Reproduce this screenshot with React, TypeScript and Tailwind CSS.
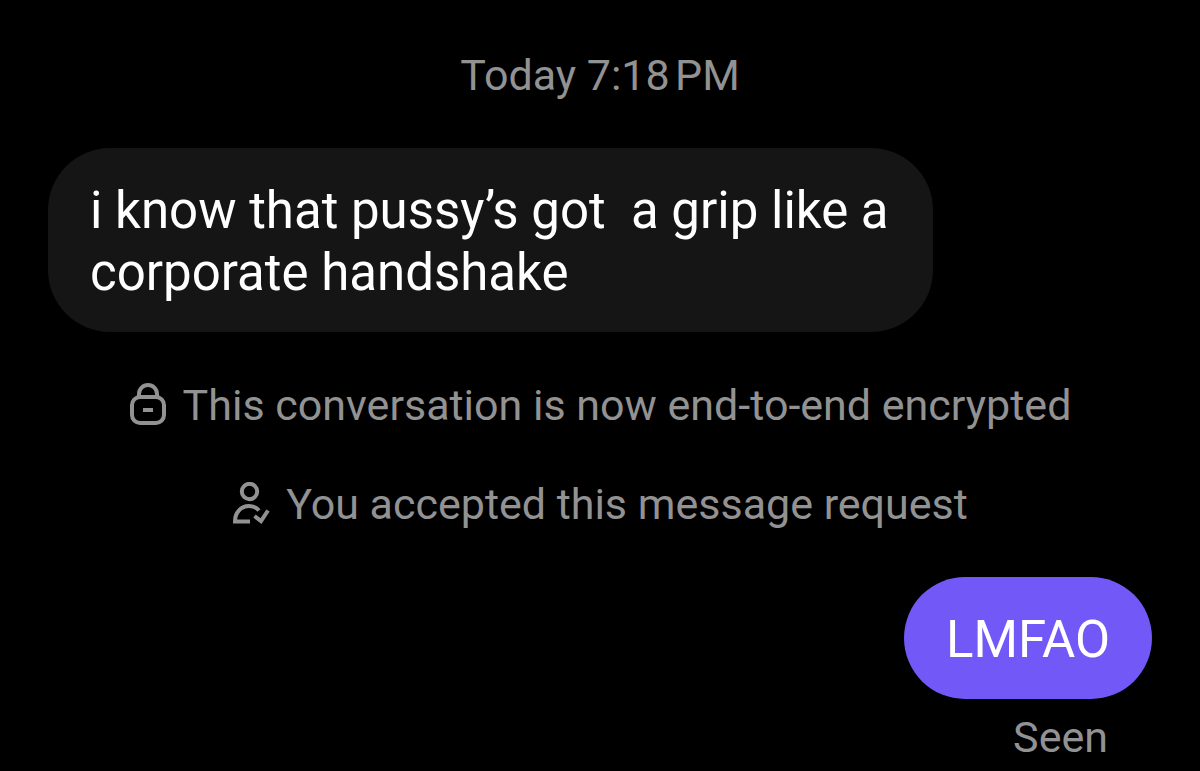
import type { ReactNode } from "react";

type Message = {
    text: string;
    mine: boolean;
    seen?: boolean;
};

function LockIcon() {
    return (
        <svg viewBox="0 0 38 44" className="h-11 w-[38px] shrink-0" fill="none" stroke="currentColor" strokeWidth="4" aria-hidden="true">
            <rect x="3" y="14" width="32" height="26" rx="8" />
            <path d="M10 14v-3a9 9 0 0 1 18 0v3" />
            <path d="M14 27h10" />
        </svg>
    );
}

function UserCheckIcon() {
    return (
        <svg viewBox="0 0 38 44" className="h-11 w-[38px] shrink-0" fill="none" stroke="currentColor" strokeWidth="4" aria-hidden="true">
            <circle cx="17.500" cy="9.500" r="7.700" />
            <path d="M18 39.500H3c0-9 6-15.500 14-15.500 4 0 7.500 1.500 10 4.500" />
            <path d="M22.500 34l6.500 5L36 28.500" />
        </svg>
    );
}

function Notice({ icon, children }: { icon?: ReactNode; children: ReactNode }) {
    return (
        <div className="flex items-center justify-center gap-4 text-[43px] leading-[52px] text-[#929292]">
            {icon}
            <p>{children}</p>
        </div>
    );
}

function Bubble({ message }: { message: Message }) {
    return (
        <div className={`flex flex-col ${message.mine ? "items-end" : "items-start"}`}>
            <p
                className={`max-w-[885px] whitespace-pre-wrap rounded-[62px] px-[42px] pt-8 pb-7 text-[51px] leading-[62px] text-white ${message.mine ? "bg-[#7358f8]" : "bg-[#151515]"}`}
            >
                {message.text}
            </p>
            {message.seen && <span className="mt-3 px-11 text-[43px] leading-[52px] text-[#929292]">Seen</span>}
        </div>
    );
}

export default function App() {
    return (
        <main className="flex min-h-screen flex-col gap-[47px] bg-black px-12 pt-[49px] font-['Roboto',sans-serif]">
            {/* narrow no-break space before PM */}
            <Notice>Today 7:18{"\u202f"}PM</Notice>
            <Bubble message={{ text: "i know that pussy’s got  a grip like a corporate handshake", mine: false }} />
            <Notice icon={<LockIcon />}>This conversation is now end-to-end encrypted</Notice>
            <Notice icon={<UserCheckIcon />}>You accepted this message request</Notice>
            <Bubble message={{ text: "LMFAO", mine: true, seen: true }} />
        </main>
    );
}
